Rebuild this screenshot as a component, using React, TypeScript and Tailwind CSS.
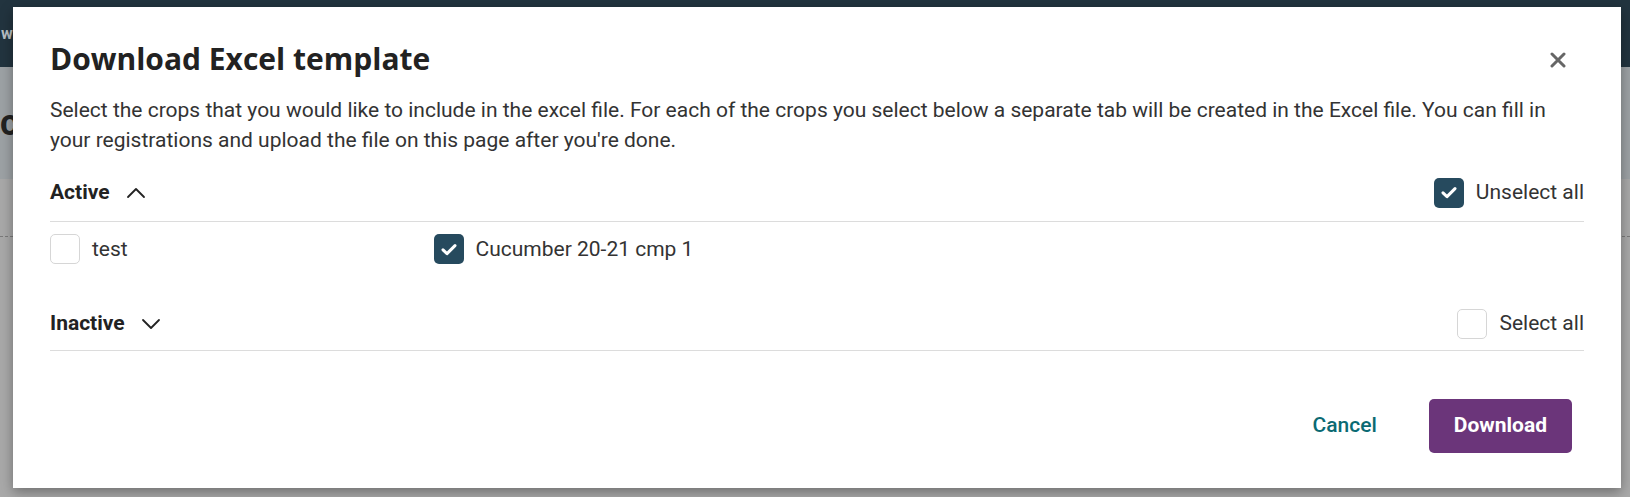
import React, { useState } from 'react';

const Check = ({ checked, onClick }: { checked: boolean; onClick?: () => void }) => (
  <button
    type="button"
    onClick={onClick}
    className={
      checked
        ? 'flex h-[30px] w-[30px] shrink-0 items-center justify-center rounded-[5px] bg-[#264a5e]'
        : 'flex h-[30px] w-[30px] shrink-0 items-center justify-center rounded-[5px] border border-[#d6d6d6] bg-white'
    }
  >
    {checked && (
      <svg width="16" height="13" viewBox="0 0 16 13" fill="none">
        <path d="M2 6.8 L6 10.6 L14 2.6" stroke="white" strokeWidth="3" strokeLinecap="round" strokeLinejoin="round" />
      </svg>
    )}
  </button>
);

const Chevron = ({ up }: { up: boolean }) => (
  <svg width="20" height="12" viewBox="0 0 20 12" fill="none">
    {up ? (
      <path d="M2 10 L10 2 L18 10" stroke="#222" strokeWidth="1.8" strokeLinecap="round" strokeLinejoin="round" />
    ) : (
      <path d="M2 2 L10 10 L18 2" stroke="#222" strokeWidth="1.8" strokeLinecap="round" strokeLinejoin="round" />
    )}
  </svg>
);

const crops = ['test', 'Cucumber 20-21 cmp 1'];

export default function App() {
  const [selected, setSelected] = useState<Record<string, boolean>>({ 'Cucumber 20-21 cmp 1': true });
  const [activeOpen, setActiveOpen] = useState(true);
  const [inactiveOpen, setInactiveOpen] = useState(false);

  const toggle = (name: string) => setSelected({ ...selected, [name]: !selected[name] });

  return (
    <div className="relative h-[497px] w-[1630px] overflow-hidden bg-[#a9a9a9] font-['Roboto',sans-serif]">
      {/* page behind the dimmed overlay */}
      <div className="flex h-[67px] items-center bg-[#22343f] text-[16px] font-bold text-[#b9c0c4]">
        <span className="ml-[1px]">w</span>
      </div>
      <div className="flex h-[112px] items-center bg-[#9da2a5]">
        <span className="text-[36px] font-bold leading-none text-[#222]">c</span>
      </div>
      <div className="mt-[57px] border-t border-dashed border-[#7a7a7a]" />

      {/* dialog */}
      <div className="absolute left-[13px] top-[7px] w-[1608px] bg-white px-[37px] pb-[35px] pt-[32px] shadow-[0_4px_12px_rgba(0,0,0,0.35)]">
        <div className="flex items-center justify-between">
          <h2 className="font-['Open_Sans',sans-serif] text-[30px] font-bold leading-[40px] text-[#222]">Download Excel template</h2>
          <button type="button" className="mr-[14px] mt-[2px] flex h-[24px] w-[24px] items-center justify-center">
            <svg width="16" height="16" viewBox="0 0 16 16" fill="none">
              <path d="M2 2 L14 14 M14 2 L2 14" stroke="#666" strokeWidth="3" strokeLinecap="round" />
            </svg>
          </button>
        </div>
        <p className="mt-[16px] text-[21px] leading-[30px] text-[#333]">
          Select the crops that you would like to include in the excel file. For each of the crops you select below a separate tab will be created in the Excel file. You can fill in your registrations and upload the file on this page after you're done.
        </p>

        <div className="mt-[22px]">
          <div className="flex items-center justify-between border-b border-[#dcdcdc] pb-[12px]">
            <button type="button" onClick={() => setActiveOpen(!activeOpen)} className="flex items-center gap-[16px] text-[21px] font-bold text-[#222]">
              Active
              <Chevron up={activeOpen} />
            </button>
            <label className="flex items-center gap-[12px] text-[21px] text-[#333]">
              <Check checked />
              Unselect all
            </label>
          </div>
          {activeOpen && (
            <div className="grid grid-cols-4 pt-[12px] pb-[12px]">
              {crops.map((crop) => (
                <label key={crop} className="flex items-center gap-[12px] text-[21px] text-[#333]">
                  <Check checked={!!selected[crop]} onClick={() => toggle(crop)} />
                  {crop}
                </label>
              ))}
            </div>
          )}
        </div>

        <div className="mt-[31px]">
          <div className="flex items-center justify-between border-b border-[#dcdcdc] pb-[10px]">
            <button type="button" onClick={() => setInactiveOpen(!inactiveOpen)} className="flex items-center gap-[16px] text-[21px] font-bold text-[#222]">
              Inactive
              <Chevron up={inactiveOpen} />
            </button>
            <label className="flex items-center gap-[12px] text-[21px] text-[#333]">
              <Check checked={false} />
              Select all
            </label>
          </div>
        </div>

        <div className="mt-[48px] flex items-center justify-end gap-[28px] pr-[12px]">
          <button type="button" className="px-[24px] text-[21px] font-medium text-[#0b6a73]">
            Cancel
          </button>
          <button type="button" className="h-[54px] rounded-[5px] bg-[#6b357a] px-[25px] text-[21px] font-bold text-white">
            Download
          </button>
        </div>
      </div>
    </div>
  );
}
